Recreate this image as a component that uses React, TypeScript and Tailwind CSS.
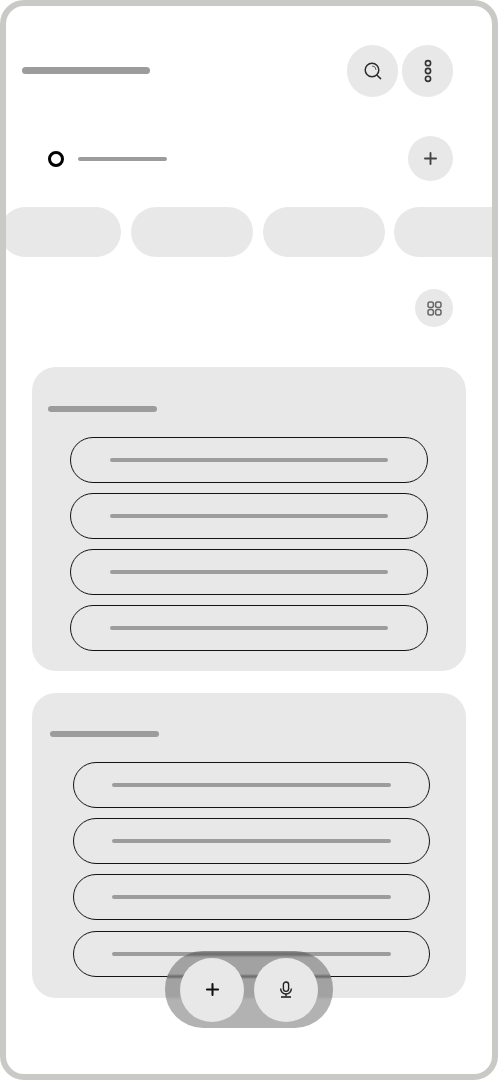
import { Plus } from 'lucide-react';

// Wireframe skeleton of a notes-style screen: bars stand in for text.

function Bar({ className }: { className: string }) {
  return <div className={`rounded-full bg-[#9c9c9c] ${className}`} />;
}

function SearchIcon() {
  return (
    <svg width="20" height="20" viewBox="0 0 20 20" fill="none" stroke="#2b2b2b" strokeWidth="1.5">
      <circle cx="9" cy="9" r="6.8" />
      <path d="M14 14.2 L17.6 17.6" strokeLinecap="round" />
      <path d="M9 5 A4 4 0 0 1 13 9" strokeWidth="1" stroke="#666" />
    </svg>
  );
}

function DotsIcon() {
  return (
    <svg width="10" height="24" viewBox="0 0 10 24" fill="none" stroke="#333" strokeWidth="1.6">
      <circle cx="5" cy="4.2" r="2.6" />
      <circle cx="5" cy="12" r="2.6" />
      <circle cx="5" cy="19.8" r="2.6" />
    </svg>
  );
}

function GridIcon() {
  return (
    <svg width="15" height="15" viewBox="0 0 15 15" fill="none" stroke="#666" strokeWidth="1.5">
      <rect x="1" y="1" width="5.4" height="5.4" rx="2" />
      <rect x="8.6" y="1" width="5.4" height="5.4" rx="2" />
      <rect x="1" y="8.6" width="5.4" height="5.4" rx="2" />
      <rect x="8.6" y="8.6" width="5.4" height="5.4" rx="2" />
    </svg>
  );
}

function MicIcon() {
  return (
    <svg width="14" height="17" viewBox="0 0 14 17" fill="none" stroke="#222" strokeWidth="1.4">
      <rect x="4.4" y="1" width="5.2" height="9.4" rx="2.6" />
      <path d="M1.6 7.6 A5.4 5.4 0 0 0 12.4 7.6" />
      <path d="M7 13 V15.6" />
      <path d="M2 16 H12" strokeWidth="1.6" />
    </svg>
  );
}

function Row({ barClass }: { barClass: string }) {
  return (
    <div className="flex h-[46px] items-center rounded-[23px] border-[1.25px] border-[#141414]">
      <Bar className={`h-[4px] ${barClass}`} />
    </div>
  );
}

function Card({
  className,
  titleClass,
  rowsClass,
  barClass,
}: {
  className: string;
  titleClass: string;
  rowsClass: string;
  barClass: string;
}) {
  return (
    <section className={`mx-[26px] rounded-[24px] bg-[#e8e8e8] ${className}`}>
      <Bar className={`h-[6px] w-[109px] ${titleClass}`} />
      <div className={`flex flex-col gap-[10.2px] ${rowsClass}`}>
        {[0, 1, 2, 3].map((i) => (
          <Row key={i} barClass={barClass} />
        ))}
      </div>
    </section>
  );
}

export default function App() {
  return (
    <div className="relative h-[1080px] w-[498px] overflow-hidden bg-white">
      <div className="h-full overflow-hidden rounded-[24px] border-[6px] border-[#c9cac5] bg-white">
        {/* header */}
        <div className="flex h-[91px] items-start justify-between pl-4 pr-[39px] pt-[39px]">
          <Bar className="mt-[22px] h-[7px] w-[127.5px]" />
          <div className="flex gap-1">
            <button className="flex h-[52px] w-[51px] items-center justify-center rounded-full bg-[#e8e8e8]">
              <SearchIcon />
            </button>
            <button className="flex h-[52px] w-[51px] items-center justify-center rounded-full bg-[#e8e8e8]">
              <DotsIcon />
            </button>
          </div>
        </div>

        {/* list picker */}
        <div className="mt-[39px] flex h-[45px] items-center pl-[42px] pr-[39px]">
          <div className="h-4 w-4 rounded-full border-[3px] border-black" />
          <Bar className="ml-[14px] h-[4px] w-[89px]" />
          <button className="ml-auto flex h-[45px] w-[45px] items-center justify-center rounded-full bg-[#e8e8e8]">
            <Plus size={19} strokeWidth={2.4} color="#444" />
          </button>
        </div>

        {/* chips */}
        <div className="mt-[26px] flex gap-[10px] overflow-hidden">
          <div className="-ml-[6px] h-[50px] w-[121px] shrink-0 rounded-[25px] bg-[#e8e8e8]" />
          <div className="h-[50px] w-[122px] shrink-0 rounded-[25px] bg-[#e8e8e8]" />
          <div className="h-[50px] w-[122px] shrink-0 rounded-[25px] bg-[#e8e8e8]" />
          <div className="-ml-px h-[50px] w-[122px] shrink-0 rounded-[25px] bg-[#e8e8e8]" />
        </div>

        {/* view toggle */}
        <div className="mt-[32px] flex justify-end pr-[39px]">
          <button className="flex h-[38px] w-[38px] items-center justify-center rounded-full bg-[#e8e8e8]">
            <GridIcon />
          </button>
        </div>

        <Card
          className="mt-[40px] h-[304px] pt-[39px]"
          titleClass="ml-[16px]"
          rowsClass="ml-[38px] mr-[38px] mt-[24.6px]"
          barClass="ml-[39px] w-[278px]"
        />
        <Card
          className="mt-[22px] h-[305px] pt-[39px]"
          titleClass="ml-[18px] -translate-y-px"
          rowsClass="ml-[41px] mr-[36px] mt-[24px]"
          barClass="ml-[38px] w-[279px]"
        />
      </div>

      {/* floating actions */}
      <div className="absolute left-[165px] top-[951px] flex h-[77px] w-[168px] items-center justify-center gap-[10px] rounded-[38px] bg-black/30 backdrop-blur-[1px]">
        <button className="flex h-16 w-16 items-center justify-center rounded-full bg-[#e8e8e8]">
          <Plus size={19} strokeWidth={2.6} color="#111" />
        </button>
        <button className="flex h-16 w-16 items-center justify-center rounded-full bg-[#e8e8e8]">
          <MicIcon />
        </button>
      </div>
    </div>
  );
}
